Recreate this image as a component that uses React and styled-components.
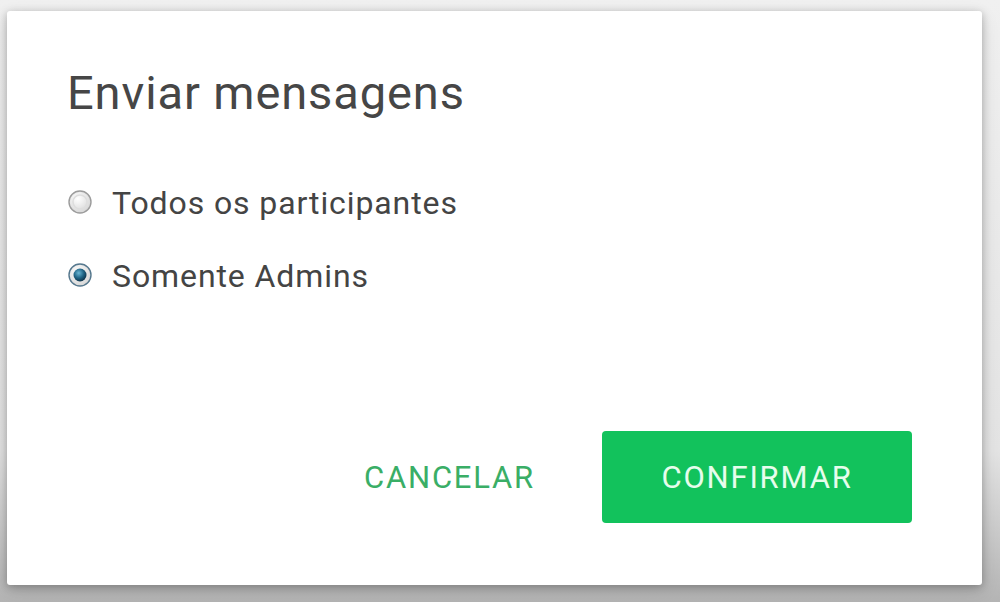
import React, { useState } from "react";
import styled, { createGlobalStyle } from "styled-components";

const GlobalStyle = createGlobalStyle`
  html, body {
    margin: 0;
    padding: 0;
    height: 100%;
  }
  body {
    background: linear-gradient(to bottom, #f0f0f0 0%, #e3e3e3 75%, #b4b4b4 100%);
    font-family: Roboto, "Liberation Sans", sans-serif;
  }
  #root {
    height: 100%;
  }
`;

const Page = styled.div`
  height: 602px;
  box-sizing: border-box;
  padding: 11px 18px 17px 7px;
  display: flex;
`;

const Dialog = styled.div`
  flex: 1;
  background: #fff;
  border-radius: 3px;
  box-shadow: 0 2px 8px rgba(0, 0, 0, 0.25), 0 6px 18px rgba(0, 0, 0, 0.12);
  display: flex;
  flex-direction: column;
  padding: 58px 70px 62px 60px;
  box-sizing: border-box;
`;

const Title = styled.h2`
  margin: 0;
  font-weight: 400;
  font-size: 47px;
  line-height: 47px;
  letter-spacing: 0.9px;
  color: #464646;
`;

const Options = styled.div`
  display: flex;
  flex-direction: column;
  gap: 39px;
  margin-top: 70px;
`;

const Option = styled.label`
  display: flex;
  align-items: center;
  gap: 19px;
  font-size: 32px;
  line-height: 34px;
  letter-spacing: 0.9px;
  color: #444;
  cursor: pointer;
`;

const RadioBox = styled.span`
  display: flex;
  margin-top: -3px;
`;

const Footer = styled.div`
  margin-top: auto;
  display: flex;
  justify-content: flex-end;
  align-items: center;
  gap: 67px;
`;

const Button = styled.button`
  border: none;
  font-family: inherit;
  font-size: 31px;
  letter-spacing: 1.8px;
  text-transform: uppercase;
  cursor: pointer;
  border-radius: 4px;
  height: 92px;
  background: ${(p) => (p.$primary ? "#12c25c" : "transparent")};
  color: ${(p) => (p.$primary ? "#e6fdec" : "#3aae66")};
  padding: 0;
  width: ${(p) => (p.$primary ? "310px" : "auto")};
`;

const RadioIcon = ({ checked }) => (
  <svg width="26" height="26" viewBox="0 0 26 26">
    <defs>
      <radialGradient id="rb" cx="40%" cy="35%" r="70%">
        <stop offset="0%" stopColor="#ffffff" />
        <stop offset="100%" stopColor="#d4d4d4" />
      </radialGradient>
      <radialGradient id="dot" cx="40%" cy="35%" r="70%">
        <stop offset="0%" stopColor="#6ab6d4" />
        <stop offset="55%" stopColor="#1f6384" />
        <stop offset="100%" stopColor="#0c2c42" />
      </radialGradient>
    </defs>
    <circle cx="13" cy="13" r="11" fill="url(#rb)" stroke={checked ? "#56788e" : "#9c9c9c"} strokeWidth="1.4" />
    {checked ? (
      <circle cx="13" cy="13" r="6.5" fill="url(#dot)" />
    ) : (
      <circle cx="13" cy="13" r="7" fill="none" stroke="#dedede" strokeWidth="1.6" />
    )}
  </svg>
);

const HiddenInput = styled.input`
  display: none;
`;

export default function App() {
  const [value, setValue] = useState("admins");
  const options = [
    { id: "all", label: "Todos os participantes" },
    { id: "admins", label: "Somente Admins" },
  ];
  return (
    <>
      <GlobalStyle />
      <Page>
        <Dialog>
          <Title>Enviar mensagens</Title>
          <Options>
            {options.map((o) => (
              <Option key={o.id}>
                <HiddenInput
                  type="radio"
                  name="send"
                  checked={value === o.id}
                  onChange={() => setValue(o.id)}
                />
                <RadioBox>
                  <RadioIcon checked={value === o.id} />
                </RadioBox>
                {o.label}
              </Option>
            ))}
          </Options>
          <Footer>
            <Button>Cancelar</Button>
            <Button $primary>Confirmar</Button>
          </Footer>
        </Dialog>
      </Page>
    </>
  );
}
